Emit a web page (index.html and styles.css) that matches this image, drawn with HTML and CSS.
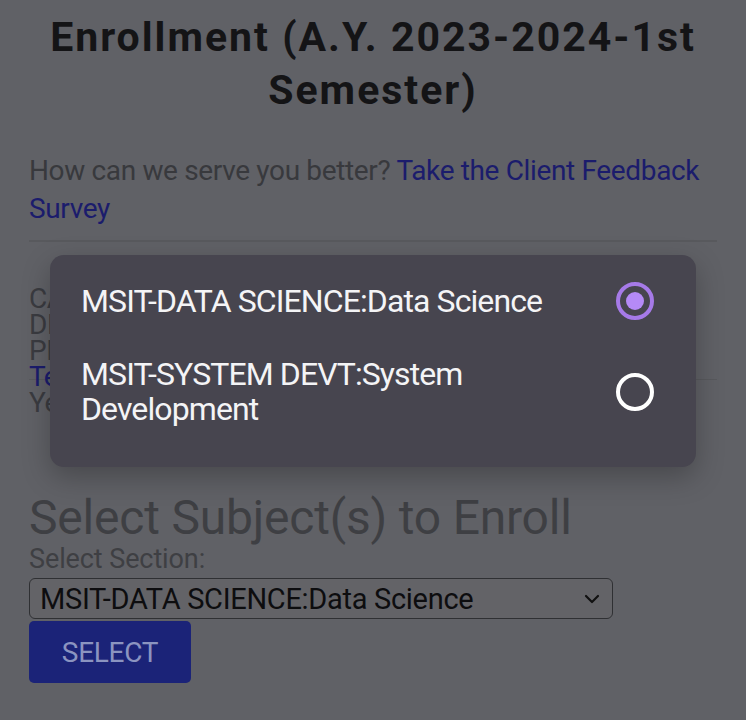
FILE: index.html
```html
<!DOCTYPE html>
<html>
<head>
<meta charset="utf-8">
<link rel="stylesheet" href="styles.css">
</head>
<body>
<div class="page">
  <h1 class="title">Enrollment (A.Y. 2023-2024-1st Semester)</h1>
  <p class="survey">How can we serve you better? <a class="link">Take the Client Feedback Survey</a></p>
  <div class="rule"></div>
  <div class="info">
    <div>CAMPUS: Main Campus</div>
    <div>DEPARTMENT: Graduate School</div>
    <div>PROGRAM: Master of Science in IT</div>
    <div class="rule rule-tight"></div>
    <div><a class="link">Terms and Conditions</a></div>
    <div>Year Level: 1st Year</div>
  </div>
  <h2 class="subhead">Select Subject(s) to Enroll</h2>
  <div class="label">Select Section:</div>
  <div class="select">
    <span>MSIT-DATA SCIENCE:Data Science</span>
    <svg class="chev" width="16" height="10" viewBox="0 0 16 10"><path d="M2 2 L8 8 L14 2" fill="none" stroke="#111" stroke-width="2.2" stroke-linecap="round" stroke-linejoin="round"/></svg>
  </div>
  <div class="btn">SELECT</div>
</div>

<div class="dialog">
  <div class="opt">
    <span class="opt-text nowrap">MSIT-DATA SCIENCE:Data Science</span>
    <span class="radio radio-on"><span class="dot"></span></span>
  </div>
  <div class="opt">
    <span class="opt-text">MSIT-SYSTEM DEVT:System Development</span>
    <span class="radio"></span>
  </div>
</div>
</body>
</html>
```
FILE: styles.css
```css
html, body {
  margin: 0;
  padding: 0;
  background: #606166;
  width: 746px;
  height: 720px;
  overflow: hidden;
  font-family: Roboto, "Liberation Sans", sans-serif;
}
.page {
  padding: 0 29px;
  position: relative;
}
.title {
  margin: 0;
  padding-top: 11px;
  text-align: center;
  font-size: 41px;
  line-height: 53px;
  font-weight: 700;
  letter-spacing: 2px;
  color: #141416;
}
.survey {
  margin: 0;
  margin-top: 35px;
  font-size: 28px;
  line-height: 38px;
  color: #38393d;
  letter-spacing: -0.35px;
}
.link {
  color: #1b1c6c;
}
.rule {
  height: 2px;
  background: #58595d;
  margin-top: 12px;
}
.info {
  margin-top: 44px;
  font-size: 28px;
  line-height: 26px;
  color: #3a3b40;
  letter-spacing: -0.5px;
}
.rule-tight {
  margin: 15px 0 -16px;
  height: 1px;
}
.subhead {
  margin: 0;
  margin-top: 78px;
  font-weight: 400;
  font-size: 48px;
  line-height: 48px;
  color: #3e3f43;
  letter-spacing: -0.2px;
}
.label {
  font-size: 27px;
  line-height: 28px;
  color: #3e3f43;
  margin-top: 3px;
  letter-spacing: -0.1px;
}
.select {
  margin-top: 5px;
  width: 584px;
  height: 41px;
  box-sizing: border-box;
  border: 1.5px solid #2f3033;
  border-radius: 6px;
  background: #636367;
  display: flex;
  align-items: center;
  justify-content: space-between;
  padding: 0 12px 0 10px;
  font-size: 29px;
  color: #0d0d0f;
  letter-spacing: -0.3px;
}
.btn {
  margin-top: 2px;
  width: 162px;
  height: 62px;
  border-radius: 5px;
  background: #1b2378;
  color: #8b94c0;
  font-size: 28px;
  display: flex;
  align-items: center;
  justify-content: center;
  letter-spacing: -0.3px;
}
.dialog {
  position: absolute;
  left: 50px;
  top: 255px;
  width: 646px;
  height: 212px;
  box-sizing: border-box;
  background: #47454f;
  border-radius: 14px;
  box-shadow: 0 10px 28px rgba(0,0,0,0.25);
  padding: 20px 42px 0 31px;
  display: flex;
  flex-direction: column;
}
.opt {
  display: flex;
  align-items: center;
  justify-content: space-between;
}
.opt:first-child {
  height: 52px;
}
.opt:last-child {
  margin-top: 28px;
  height: 74px;
}
.opt-text {
  width: 460px;
  font-size: 32px;
  line-height: 35px;
  color: #f4f4f6;
  letter-spacing: -0.9px;
}
.nowrap {
  white-space: nowrap;
}
.radio {
  width: 38px;
  height: 38px;
  box-sizing: border-box;
  border: 4px solid #ffffff;
  border-radius: 50%;
  display: flex;
  align-items: center;
  justify-content: center;
}
.radio-on {
  border-color: #a67ae8;
}
.dot {
  width: 18px;
  height: 18px;
  border-radius: 50%;
  background: #b58af7;
}
```
